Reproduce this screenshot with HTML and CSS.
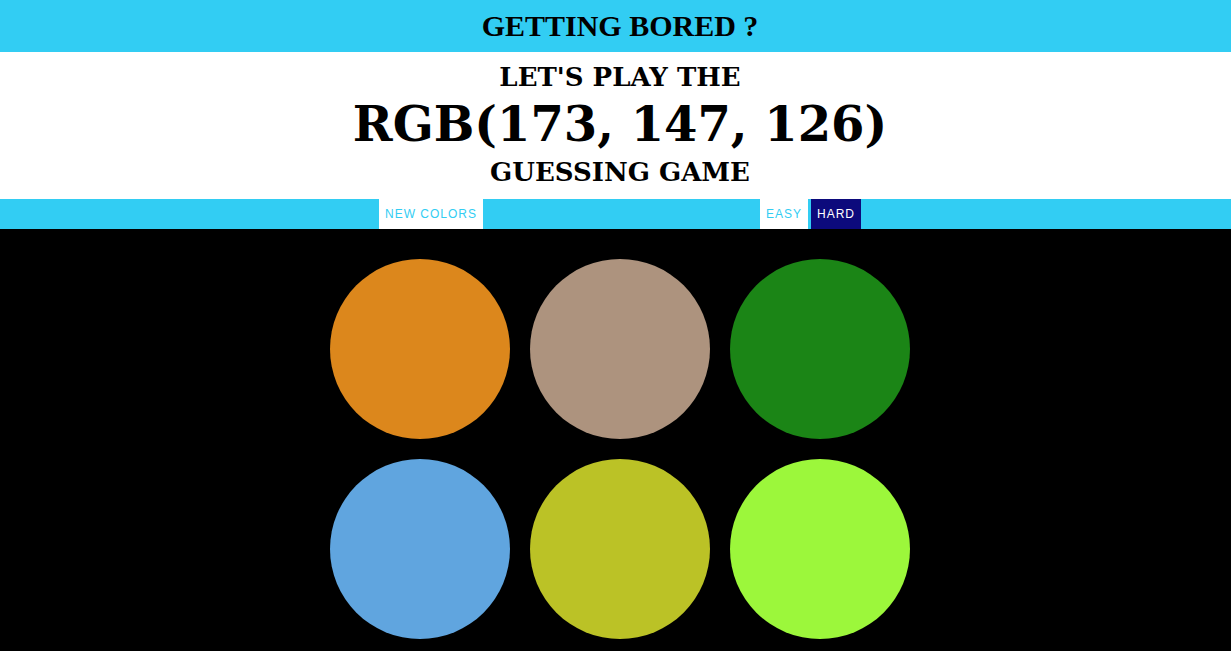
FILE: index.html
```html
<!DOCTYPE html>
<html>
<head>
<meta charset="utf-8">
<link rel="stylesheet" href="styles.css">
</head>
<body>
<header class="topbar"><h1 class="topbar-title">GETTING BORED ?</h1></header>
<section class="intro">
  <div class="intro-line">LET'S PLAY THE</div>
  <div class="intro-rgb">RGB(173, 147, 126)</div>
  <div class="intro-line">GUESSING GAME</div>
</section>
<nav class="controls">
  <div class="controls-inner">
    <button class="btn">NEW COLORS</button>
    <span class="spacer"></span>
    <button class="btn">EASY</button>
    <button class="btn btn-selected">HARD</button>
  </div>
</nav>
<main class="board">
  <div class="grid">
    <div class="swatch" style="background:#dc871c"></div>
    <div class="swatch" style="background:#ad937e"></div>
    <div class="swatch" style="background:#1b8516"></div>
    <div class="swatch" style="background:#60a5df"></div>
    <div class="swatch" style="background:#bbc226"></div>
    <div class="swatch" style="background:#9cf73b"></div>
  </div>
</main>
</body>
</html>
```
FILE: styles.css
```css
html, body {
  margin: 0;
  padding: 0;
  background: #000;
}
body {
  font-family: "Liberation Serif", serif;
  overflow: hidden;
}
.topbar {
  background: #32cdf3;
  height: 52px;
  display: flex;
  align-items: center;
  justify-content: center;
  padding-left: 9px;
}
.topbar-title {
  margin: 0;
  font-size: 30px;
  font-weight: bold;
  color: #000;
  line-height: 1;
}
.intro {
  background: #fff;
  height: 147px;
  display: flex;
  flex-direction: column;
  align-items: center;
  padding-left: 9px;
  box-sizing: border-box;
  padding-top: 10px;
}
.intro-line {
  font-family: "DejaVu Serif", serif;
  font-weight: bold;
  font-size: 26px;
  line-height: 30px;
}
.intro-rgb {
  font-family: "DejaVu Serif", serif;
  font-weight: bold;
  font-size: 48px;
  line-height: 65px;
}
.controls {
  background: #32cdf3;
  height: 30px;
  display: flex;
  justify-content: center;
  padding-left: 9px;
}
.controls-inner {
  width: 482px;
  display: flex;
  align-items: stretch;
}
.spacer { flex: 1; }
.btn {
  border: none;
  margin: 0;
  background: #fff;
  color: #32cdf3;
  font-family: "Liberation Sans", Arial, sans-serif;
  font-size: 12px;
  letter-spacing: 1px;
  padding: 0 6px;
  height: 30px;
}
.btn + .btn { margin-left: 3px; }
.btn-selected {
  background: #0c0a7c;
  color: #fff;
}
.board {
  padding-top: 30px;
  padding-left: 9px;
  display: flex;
  justify-content: center;
}
.grid {
  display: grid;
  grid-template-columns: repeat(3, 180px);
  gap: 20px;
}
.swatch {
  width: 180px;
  height: 180px;
  border-radius: 50%;
}
```
